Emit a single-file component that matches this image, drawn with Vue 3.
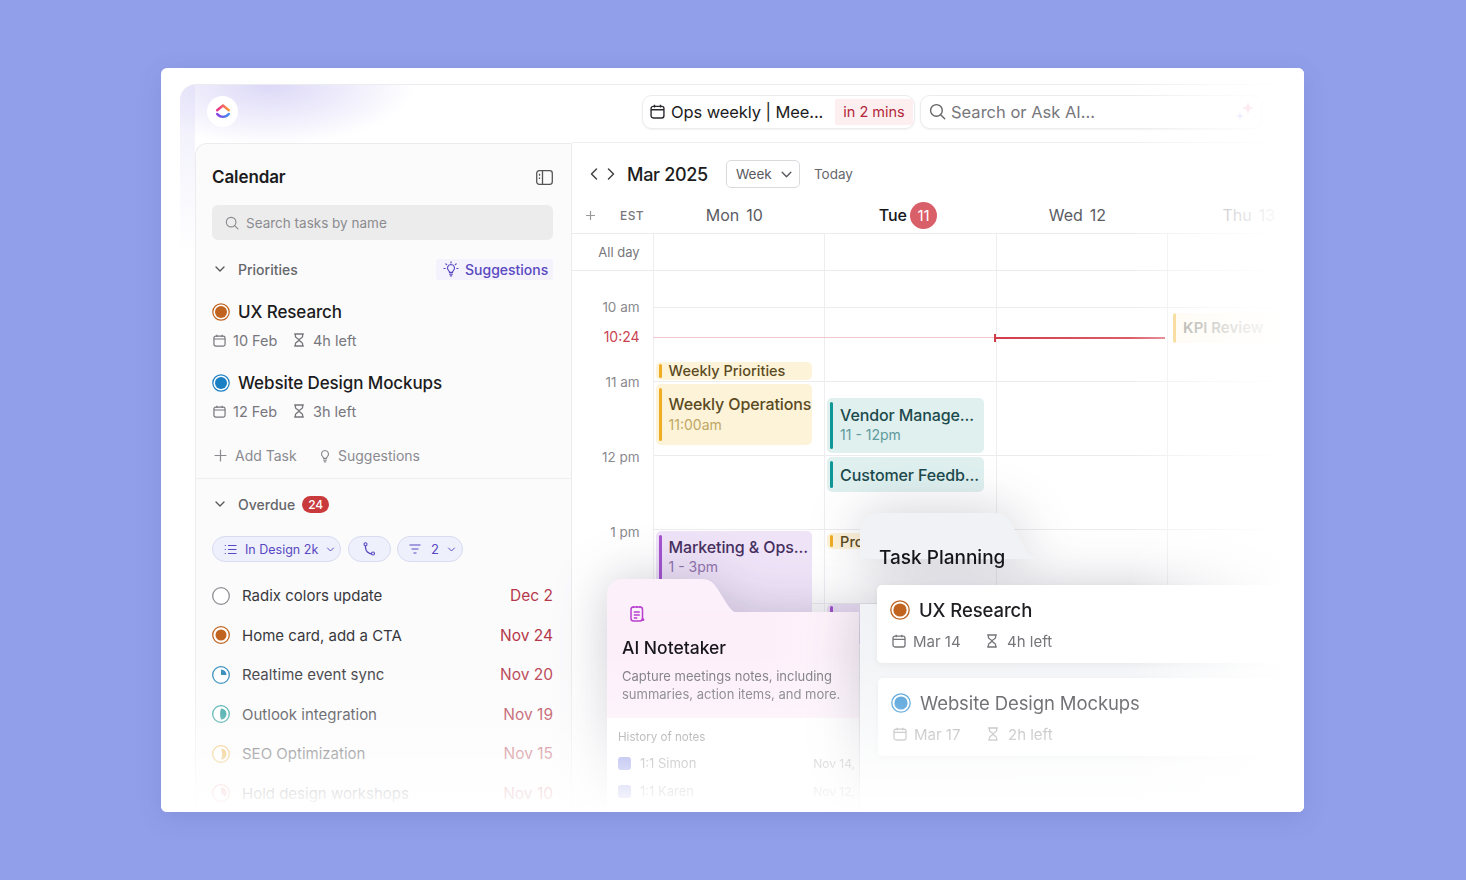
<template>
  <div class="panel">
    <svg class="defs" width="0" height="0" aria-hidden="true">
      <symbol id="i-cal" viewBox="0 0 14 14">
        <rect x="1" y="2.2" width="12" height="10.8" rx="2" fill="none" stroke="currentColor" stroke-width="1.3" />
        <path d="M1 5.4h12M4.2.8v2.4M9.8.8v2.4" fill="none" stroke="currentColor" stroke-width="1.3" />
      </symbol>
      <symbol id="i-glass" viewBox="0 0 12 14">
        <path d="M1.2 1h9.6M1.2 13h9.6M2.4 1v2.4c0 1.500 3.600 2.500 3.600 3.600S2.400 9.200 2.400 10.600V13M9.600 1v2.400C9.600 4.900 6 5.900 6 7s3.600 2.200 3.600 3.600V13" fill="none" stroke="currentColor" stroke-width="1.300" />
      </symbol>
      <symbol id="i-search" viewBox="0 0 16 16">
        <circle cx="7" cy="7" r="5.500" fill="none" stroke="currentColor" stroke-width="1.300" />
        <path d="M11 11l3.800 3.800" fill="none" stroke="currentColor" stroke-width="1.300" stroke-linecap="round" />
      </symbol>
      <symbol id="i-down" viewBox="0 0 12 12">
        <path d="M2 4l4 4 4-4" fill="none" stroke="currentColor" stroke-width="1.300" stroke-linecap="round" stroke-linejoin="round" />
      </symbol>
      <symbol id="i-bulb" viewBox="0 0 16 16">
        <path d="M8 3.500a3.600 3.600 0 0 0-2.200 6.400c.5.400.7.900.7 1.400h3c0-.5.200-1 .7-1.400A3.600 3.600 0 0 0 8 3.500zM6.700 13.200h2.600M7.300 14.800h1.400" fill="none" stroke="currentColor" stroke-width="1.200" stroke-linecap="round" />
      </symbol>
    </svg>

    <div class="frame">
      <header class="topbar">
        <div class="logo">
          <svg width="16" height="17" viewBox="0 0 16 17">
            <defs>
              <linearGradient id="lg-up" x1="0" x2="1" y1="0" y2="0">
                <stop offset="0" stop-color="#e8308f" />
                <stop offset="1" stop-color="#fb9a36" />
              </linearGradient>
              <linearGradient id="lg-down" x1="0" x2="1" y1="0" y2="0">
                <stop offset="0" stop-color="#8a3fe0" />
                <stop offset="1" stop-color="#3f8df0" />
              </linearGradient>
            </defs>
            <path d="M2.200 7.200L8 2.500l5.800 4.700" fill="none" stroke="url(#lg-up)" stroke-width="2.400" stroke-linecap="round" stroke-linejoin="round" />
            <path d="M2.200 11c3.200 3.800 8.400 3.800 11.600 0" fill="none" stroke="url(#lg-down)" stroke-width="2.400" stroke-linecap="round" />
          </svg>
        </div>
        <div class="meeting">
          <svg class="meeting-icon" width="15" height="15"><use href="#i-cal" /></svg>
          <span class="meeting-name">Ops weekly | Mee...</span>
          <span class="meeting-time">in 2 mins</span>
        </div>
        <div class="ask">
          <svg class="ask-icon" width="17" height="17"><use href="#i-search" /></svg>
          <span>Search or Ask AI...</span>
          <svg class="sparkle" width="20" height="20" viewBox="0 0 20 20">
            <path d="M13 1l1.500 4.500L19 7l-4.500 1.500L13 13l-1.500-4.500L7 7l4.500-1.500z" fill="#f57ea6" />
            <path d="M5 11l1 3 3 1-3 1-1 3-1-3-3-1 3-1z" fill="#a3aaf5" />
          </svg>
        </div>
      </header>

      <div class="body">
        <aside class="sidebar">
          <section class="section first">
            <div class="side-head">
              <h1>Calendar</h1>
              <svg width="17" height="15" viewBox="0 0 17 15">
                <rect x=".7" y=".7" width="15.600" height="13.600" rx="2.500" fill="none" stroke="#555" stroke-width="1.300" />
                <path d="M6.500 1v13" stroke="#555" stroke-width="1.300" />
                <path d="M3.500 3.800v2M3.500 7.500v1.500" stroke="#555" stroke-width="1.300" />
              </svg>
            </div>
            <div class="side-search">
              <svg width="14" height="14"><use href="#i-search" /></svg>
              <span>Search tasks by name</span>
            </div>
            <div class="group-head">
              <svg class="chev" width="12" height="12"><use href="#i-down" /></svg>
              <span class="group-name">Priorities</span>
              <span class="suggest">
                <svg width="16" height="16" viewBox="0 0 16 16">
                  <use href="#i-bulb" />
                  <path d="M8 .8v1.200M2.800 2.800l.9.900M13.200 2.800l-.9.900M1 7.500h1.200M13.800 7.500H15" stroke="currentColor" stroke-width="1.200" stroke-linecap="round" />
                </svg>
                Suggestions
              </span>
            </div>
            <div v-for="task in priorities" :key="task.name" class="task">
              <div class="task-title">
                <svg width="18" height="18" viewBox="0 0 18 18">
                  <circle cx="9" cy="9" r="8.200" fill="#fff" :stroke="task.color" stroke-width="1.200" />
                  <circle cx="9" cy="9" r="6" :fill="task.color" />
                </svg>
                {{ task.name }}
              </div>
              <div class="task-meta">
                <svg width="13" height="13"><use href="#i-cal" /></svg>
                <span class="meta-date">{{ task.date }}</span>
                <svg width="12" height="14"><use href="#i-glass" /></svg>
                <span>{{ task.left }}</span>
              </div>
            </div>
            <div class="add-row">
              <svg width="13" height="13" viewBox="0 0 13 13">
                <path d="M6.500 1v11M1 6.500h11" stroke="currentColor" stroke-width="1.200" stroke-linecap="round" />
              </svg>
              <span class="add-label">Add Task</span>
              <svg width="16" height="16"><use href="#i-bulb" /></svg>
              <span>Suggestions</span>
            </div>
          </section>

          <section class="section">
            <div class="overdue-head">
              <svg class="chev" width="12" height="12"><use href="#i-down" /></svg>
              <span class="group-name">Overdue</span>
              <span class="count">24</span>
            </div>
            <div class="chips">
              <span class="chip">
                <svg width="13" height="11" viewBox="0 0 13 11">
                  <path d="M4 1.500h8.500M4 5.500h8.500M4 9.500h8.500M.8 1.500h1M.8 5.500h1M.8 9.500h1" stroke="currentColor" stroke-width="1.200" />
                </svg>
                In Design 2k
                <svg width="9" height="9"><use href="#i-down" /></svg>
              </span>
              <span class="chip chip-phone">
                <svg width="13" height="14" viewBox="0 0 13 14">
                  <path d="M2.500 2v3.500c0 3.500 3 6.500 6.500 6.500" fill="none" stroke="currentColor" stroke-width="1.300" />
                  <circle cx="2.500" cy="2.200" r="1.500" fill="#eef0fb" stroke="currentColor" stroke-width="1.100" />
                  <circle cx="10" cy="11.500" r="1.500" fill="#eef0fb" stroke="currentColor" stroke-width="1.100" />
                </svg>
              </span>
              <span class="chip chip-filter">
                <svg width="12" height="10" viewBox="0 0 12 10">
                  <path d="M.5 1h11M2.500 5h7M4.500 9h3" stroke="currentColor" stroke-width="1.200" />
                </svg>
                <span class="chip-num">2</span>
                <svg width="9" height="9"><use href="#i-down" /></svg>
              </span>
            </div>
            <div class="rows">
              <div v-for="row in overdue" :key="row.name" class="row">
                <svg width="18" height="18" viewBox="0 0 18 18">
                  <circle cx="9" cy="9" r="8.300" fill="#fff" :stroke="row.color" stroke-width="1.300" />
                  <circle v-if="row.dot" cx="9" cy="9" r="5.500" :fill="row.color" />
                  <path v-if="row.pie" :d="row.pie" :fill="row.color" />
                </svg>
                <span class="row-name">{{ row.name }}</span>
                <span class="row-date">{{ row.date }}</span>
              </div>
            </div>
          </section>
        </aside>

        <main class="cal">
          <div class="toolbar">
            <svg width="10" height="14" viewBox="0 0 10 14"><path d="M7.500 2L2.500 7l5 5" fill="none" stroke="#444" stroke-width="1.500" stroke-linecap="round" stroke-linejoin="round" /></svg>
            <svg class="next" width="10" height="14" viewBox="0 0 10 14"><path d="M2.500 2l5 5-5 5" fill="none" stroke="#444" stroke-width="1.500" stroke-linecap="round" stroke-linejoin="round" /></svg>
            <span class="month">Mar 2025</span>
            <span class="view">Week <svg width="13" height="13"><use href="#i-down" /></svg></span>
            <span class="today">Today</span>
          </div>

          <div class="days">
            <div class="days-lead">
              <svg width="11" height="11" viewBox="0 0 11 11"><path d="M5.500 1v9M1 5.500h9" stroke="#999" stroke-width="1.200" /></svg>
              <span>EST</span>
            </div>
            <div v-for="day in days" :key="day.name" class="day" :class="{ active: day.active }">
              <span>{{ day.name }}</span>
              <span v-if="day.active" class="day-badge">{{ day.num }}</span>
              <span v-else>{{ day.num }}</span>
            </div>
          </div>

          <div class="allday">
            <div class="allday-label">All day</div>
            <div v-for="day in days" :key="day.name" class="allday-cell"></div>
          </div>

          <div class="grid">
            <div class="times">
              <div v-for="t in times" :key="t" class="time">{{ t }}</div>
              <div class="time-now">10:24</div>
            </div>
            <div class="cols">
              <div v-for="(day, i) in days" :key="day.name" class="col">
                <div
                  v-for="ev in events.filter(e => e.col === i)"
                  :key="ev.top"
                  class="event"
                  :class="[ev.tone, ev.size]"
                  :style="{ top: ev.top + 'px', height: ev.height + 'px', width: ev.width + 'px' }"
                >
                  <div v-if="ev.title" class="event-title">{{ ev.title }}</div>
                  <div v-if="ev.sub" class="event-sub">{{ ev.sub }}</div>
                </div>
              </div>
              <div class="now-line"></div>
              <div class="now-strong"></div>
            </div>
          </div>
        </main>
      </div>
    </div>

    <div class="float notes">
      <svg class="tab" width="132" height="34" viewBox="0 0 132 34">
        <path d="M0 34V16C0 6 6 0 16 0h78c8 0 12 3 16 9l10 16c4 6 7 9 12 9z" fill="#fcf0fb" />
      </svg>
      <div class="notes-head">
        <svg class="notes-icon" width="15" height="17" viewBox="0 0 15 17">
          <rect x="1" y="2" width="11.500" height="14" rx="2.500" fill="none" stroke="#b83fd0" stroke-width="1.500" />
          <path d="M3.500 1v2M6.700 1v2M10 1v2M3.800 7h6M3.800 10h6M3.800 13h3.500" stroke="#b83fd0" stroke-width="1.300" />
          <circle cx="12.800" cy="14.500" r="1.500" fill="#b83fd0" />
        </svg>
        <h2>AI Notetaker</h2>
        <p>Capture meetings notes, including summaries, action items, and more.</p>
      </div>
      <div class="notes-list">
        <div class="notes-label">History of notes</div>
        <div v-for="n in notes" :key="n.name" class="note">
          <span class="note-mark"></span>
          <span>{{ n.name }}</span>
          <span class="note-date">{{ n.date }}</span>
        </div>
      </div>
    </div>

    <div class="float plan">
      <svg class="tab" width="182" height="46" viewBox="0 0 182 46">
        <path d="M0 46V20C0 7 7 0 20 0h112c10 0 16 3 20 12l12 22c4 8 9 12 18 12z" fill="#f0f2f5" />
      </svg>
      <div class="plan-body">
        <h2>Task Planning</h2>
        <div v-for="card in planning" :key="card.name" class="plan-card" :class="{ dim: card.dim }">
          <div class="plan-title">
            <svg width="20" height="20" viewBox="0 0 20 20">
              <circle cx="10" cy="10" r="9.200" fill="#fff" :stroke="card.color" stroke-width="1.300" />
              <circle cx="10" cy="10" r="6.600" :fill="card.color" />
            </svg>
            {{ card.name }}
          </div>
          <div class="plan-meta">
            <svg width="14" height="14"><use href="#i-cal" /></svg>
            <span class="plan-date">{{ card.date }}</span>
            <svg width="12" height="14"><use href="#i-glass" /></svg>
            <span>{{ card.left }}</span>
          </div>
        </div>
      </div>
    </div>

    <div class="fade-right"></div>
    <div class="fade-bottom"></div>
  </div>
</template>

<script setup>
const priorities = [
  { name: 'UX Research', date: '10 Feb', left: '4h left', color: '#c0641f' },
  { name: 'Website Design Mockups', date: '12 Feb', left: '3h left', color: '#1b7fc4' },
];

const overdue = [
  { name: 'Radix colors update', date: 'Dec 2', color: '#8f8f94' },
  { name: 'Home card, add a CTA', date: 'Nov 24', color: '#c0641f', dot: true },
  { name: 'Realtime event sync', date: 'Nov 20', color: '#2b86b8', pie: 'M9 3.500A5.500 5.500 0 0 1 14.500 9H9z' },
  { name: 'Outlook integration', date: 'Nov 19', color: '#2a9c9c', pie: 'M9 3.500A5.500 5.500 0 0 1 9 14.500C7.800 11 7.800 7 9 3.500z' },
  { name: 'SEO Optimization', date: 'Nov 15', color: '#e8a93a', pie: 'M9 3.500A5.500 5.500 0 0 1 9 14.500C10.500 11 10.500 7 9 3.500z' },
  { name: 'Hold design workshops', date: 'Nov 10', color: '#e58080', pie: 'M9 3.500A5.500 5.500 0 0 1 12.900 12.900L9 9z' },
];

const days = [
  { name: 'Mon', num: 10 },
  { name: 'Tue', num: 11, active: true },
  { name: 'Wed', num: 12 },
  { name: 'Thu', num: 13 },
];

const times = ['10 am', '11 am', '12 pm', '1 pm', '2 pm'];

// top is counted from the top of the hour grid
const events = [
  { col: 0, title: 'Weekly Priorities', tone: 'amber', size: 'tiny', top: 91, height: 18, width: 156 },
  { col: 0, title: 'Weekly Operations', sub: '11:00am', tone: 'amber', size: 'tall', top: 113, height: 61, width: 156 },
  { col: 0, title: 'Marketing & Ops...', sub: '1 - 3pm', tone: 'violet', top: 260, height: 90, width: 156 },
  { col: 1, title: 'Vendor Manage...', sub: '11 - 12pm', tone: 'teal', top: 127, height: 55, width: 157 },
  { col: 1, title: 'Customer Feedb...', tone: 'teal', size: 'single', top: 186, height: 35, width: 157 },
  { col: 1, title: 'Pro', tone: 'amber', size: 'tiny', top: 262, height: 16, width: 40 },
  { col: 1, tone: 'violet', size: 'tiny', top: 333, height: 40, width: 157 },
  { col: 3, title: 'KPI Review', tone: 'kpi', size: 'single', top: 42, height: 30, width: 120 },
];

const notes = [
  { name: '1:1 Simon', date: 'Nov 14,' },
  { name: '1:1 Karen', date: 'Nov 12,' },
];

const planning = [
  { name: 'UX Research', date: 'Mar 14', left: '4h left', color: '#c0641f' },
  { name: 'Website Design Mockups', date: 'Mar 17', left: '2h left', color: '#3f97d6', dim: true },
];
</script>

<style>
html, body {
  margin: 0;
  background: #919fea;
}
</style>

<style scoped>
.panel {
  position: relative;
  width: 1143px;
  height: 744px;
  margin: 68px 0 68px 161px;
  background: #fff;
  border-radius: 6px;
  overflow: hidden;
  font-family: Inter, "Liberation Sans", sans-serif;
  color: #1c1c20;
  box-shadow: 0 6px 24px rgba(60, 70, 140, .15);
}
.defs { position: absolute; }
svg { flex: none; display: block; }
h1, h2, p { margin: 0; }

.frame {
  margin: 16px 0 0 19px;
  height: 728px;
  border-top: 1px solid #ebecf0;
  border-top-left-radius: 16px;
  background:
    radial-gradient(145px 60px at 90px 0, #dcd8f7, rgba(220, 216, 247, 0) 100%),
    linear-gradient(to bottom, #efeefb, #fff 170px);
  background-size: 100% 100%, 15px 100%;
  background-repeat: no-repeat;
}
.topbar {
  height: 58px;
  box-sizing: border-box;
  padding: 0 0 5px 27px;
  display: flex;
  align-items: center;
}
.logo {
  width: 31px;
  height: 31px;
  border-radius: 50%;
  background: #fff;
  display: flex;
  align-items: center;
  justify-content: center;
  margin-right: 404px;
}
.meeting {
  width: 273px;
  height: 34px;
  box-sizing: border-box;
  border: 1px solid #ececef;
  border-radius: 10px;
  display: flex;
  align-items: center;
  background: #fff;
  box-shadow: 0 1px 2px rgba(0, 0, 0, .06);
  margin-right: 5px;
  font-size: 16.500px;
}
.meeting-icon { margin: 0 6px 0 7px; color: #2a2a2e; }
.meeting-name { white-space: nowrap; letter-spacing: -.1px; }
.meeting-time {
  margin-left: auto;
  margin-right: 1px;
  width: 78px;
  height: 26px;
  line-height: 25px;
  text-align: center;
  background: #fdeff0;
  color: #b3263a;
  font-size: 14.500px;
  border-radius: 2px;
  white-space: nowrap;
}
.ask {
  width: 342px;
  height: 34px;
  box-sizing: border-box;
  border: 1px solid #ececef;
  border-radius: 10px;
  display: flex;
  align-items: center;
  background: #fff;
  box-shadow: 0 1px 2px rgba(0, 0, 0, .06);
  font-size: 16.500px;
  color: #77777c;
  padding-left: 8px;
}
.ask-icon { margin-right: 5px; color: #666; }
.sparkle { margin-left: auto; margin-right: 6px; margin-top: -2px; }

.body { display: flex; }
.sidebar {
  width: 377px;
  margin-left: 15px;
  height: 670px;
  box-sizing: border-box;
  flex: none;
  background: #fbfbfc;
  border: 1px solid #ececef;
  border-top-left-radius: 12px;
  border-width: 1px 1px 0 1px;
}
.section { padding: 0 18px 0 16px; }
.section.first { padding-bottom: 13px; border-bottom: 1px solid #efeff2; }
.side-head {
  height: 34px;
  margin-top: 16px;
  display: flex;
  align-items: center;
  justify-content: space-between;
}
.side-head h1 { font-size: 17px; font-weight: 600; letter-spacing: -.1px; }
.side-search {
  height: 35px;
  margin-top: 11px;
  border-radius: 6px;
  background: #ececed;
  display: flex;
  align-items: center;
  gap: 7px;
  padding-left: 13px;
  color: #8b8b8f;
  font-size: 13.500px;
}
.group-head, .overdue-head {
  display: flex;
  align-items: center;
  color: #66666b;
}
.group-head { height: 22px; margin-top: 18px; }
.chev { margin: 0 12px 0 2px; color: #555; }
.group-name { font-size: 14px; font-weight: 500; }
.suggest {
  margin-left: auto;
  height: 21px;
  width: 117px;
  display: flex;
  align-items: center;
  gap: 6px;
  padding-left: 7px;
  box-sizing: border-box;
  background: #f3f2fd;
  border-radius: 3px;
  color: #5948bf;
  font-size: 14px;
  font-weight: 500;
  white-space: nowrap;
}
.task { margin-top: 21px; }
.task + .task { margin-top: 22px; }
.task-title {
  height: 22px;
  display: flex;
  align-items: center;
  gap: 8px;
  font-size: 17px;
  font-weight: 500;
  letter-spacing: -.1px;
  white-space: nowrap;
}
.task-meta {
  margin-top: 7px;
  height: 20px;
  display: flex;
  align-items: center;
  padding-left: 1px;
  font-size: 14.500px;
  color: #77777c;
}
.task-meta svg:first-child { margin-right: 7px; }
.meta-date { width: 60px; }
.task-meta svg:nth-of-type(2) { margin-right: 8px; }
.add-row {
  margin-top: 24px;
  height: 20px;
  display: flex;
  align-items: center;
  font-size: 14px;
  color: #8a8a8f;
  padding-left: 2px;
}
.add-row svg:first-of-type { margin-right: 8px; }
.add-label { width: 82px; }
.add-row svg:nth-of-type(2) { margin-right: 5px; }

.overdue-head { height: 20px; margin-top: 15px; }
.count {
  margin-left: 7px;
  background: #c93a3c;
  color: #fff;
  font-size: 12px;
  font-weight: 500;
  line-height: 17px;
  width: 27px;
  text-align: center;
  border-radius: 9px;
}
.chips { display: flex; gap: 7px; margin-top: 22px; }
.chip {
  height: 26px;
  box-sizing: border-box;
  border: 1px solid #d8dbf1;
  border-radius: 13px;
  background: #eef0fb;
  display: flex;
  align-items: center;
  padding: 0 8px 0 11px;
  gap: 8px;
  color: #5848c2;
  font-size: 12.500px;
  white-space: nowrap;
}
.chip:first-child { width: 129px; }
.chip-phone { width: 43px; padding: 0; justify-content: center; }
.chip-filter { width: 66px; margin-left: -1px; }
.chip-num { font-size: 13px; margin-left: 2px; }
.rows { margin-top: 14px; }
.row {
  height: 39.500px;
  display: flex;
  align-items: center;
  font-size: 15px;
  color: #38383d;
}
.row-name { margin-left: 12px; white-space: nowrap; }
.row-date { margin-left: auto; color: #b5384a; font-size: 15.500px; }

.cal {
  flex: 1;
  min-width: 0;
  border-top: 1px solid #efeff2;
  margin-top: -1px;
}
.toolbar {
  height: 54px;
  padding: 8px 0 0 17px;
  box-sizing: border-box;
  display: flex;
  align-items: center;
}
.next { margin-left: 7px; }
.month { font-size: 18px; font-weight: 500; margin-left: 11px; white-space: nowrap; letter-spacing: -.3px; }
.view {
  width: 74px;
  height: 28px;
  box-sizing: border-box;
  margin-left: 18px;
  border: 1px solid #d9dade;
  border-radius: 5px;
  display: flex;
  align-items: center;
  gap: 8px;
  padding-left: 9px;
  font-size: 13.500px;
  color: #5a5a5f;
}
.today { margin-left: 14px; font-size: 13.500px; color: #66666b; }
.days {
  height: 36px;
  display: flex;
  align-items: center;
  border-bottom: 1px solid #ececef;
  font-size: 16px;
}
.days-lead {
  width: 80.600px;
  flex: none;
  display: flex;
  align-items: center;
  padding-left: 13px;
  box-sizing: border-box;
  font-size: 12px;
  font-weight: 500;
  letter-spacing: .4px;
  color: #77777c;
}
.days-lead span { margin-left: 24px; }
.day {
  width: 171.500px;
  flex: none;
  display: flex;
  align-items: center;
  justify-content: center;
  gap: 7px;
  color: #5b5c63;
  padding-right: 8px;
  box-sizing: border-box;
}
.day.active { color: #16161a; font-weight: 500; gap: 3px; padding-right: 4px; }
.day-badge {
  width: 27px;
  height: 27px;
  border-radius: 50%;
  background: #d95f69;
  color: #fff;
  font-weight: 400;
  font-size: 15px;
  line-height: 27px;
  text-align: center;
}
.allday {
  height: 36px;
  display: flex;
  border-bottom: 1px solid #ececef;
}
.allday-label {
  width: 80.600px;
  flex: none;
  box-sizing: border-box;
  padding-right: 13px;
  text-align: right;
  line-height: 36px;
  font-size: 13px;
  color: #77777c;
}
.allday-cell {
  width: 171.500px;
  flex: none;
  box-sizing: border-box;
  border-left: 1px solid #eeeef0;
}
.grid { display: flex; height: 500px; }
.times {
  position: relative;
  width: 80.600px;
  flex: none;
  margin-top: -1px;
  font-size: 13.500px;
  color: #8a8a8f;
}
.time {
  height: 75px;
  line-height: 75px;
  padding-right: 13px;
  text-align: right;
}
.time-now {
  position: absolute;
  right: 13px;
  top: 58px;
  line-height: 18px;
  color: #c94452;
  font-size: 14px;
}
.cols {
  position: relative;
  display: flex;
  flex: none;
  background-image: linear-gradient(to bottom, #ececef 1px, transparent 1px);
  background-size: 100% 74px;
  background-position: 0 36px;
}
.col {
  position: relative;
  width: 171.500px;
  height: 500px;
  flex: none;
  box-sizing: border-box;
  border-left: 1px solid #eeeef0;
}
.event {
  position: absolute;
  left: 2px;
  box-sizing: border-box;
  border-radius: 5px;
  padding: 5px 0 0 13px;
  overflow: hidden;
  white-space: nowrap;
}
.event::before {
  content: "";
  position: absolute;
  left: 3px;
  top: 4px;
  bottom: 4px;
  width: 3px;
  border-radius: 2px;
  background: var(--bar);
}
.event-title { font-size: 16px; font-weight: 500; line-height: 22px; letter-spacing: -.12px; }
.event-sub { font-size: 14px; line-height: 18px; margin-top: 0; }
.event.tall { padding-top: 9px; }
.event.tall .event-sub { margin-top: 1px; }
.event.tiny { padding-top: 0; }
.event.tiny::before { top: 2px; bottom: 2px; }
.event.tiny .event-title { font-size: 14.500px; line-height: 18px; letter-spacing: 0; }
.event.single { display: flex; align-items: center; padding-top: 0; }
.amber { --bar: #f0ad24; background: #fdf3d9; color: #5b4a1e; }
.amber .event-sub { color: #bfa763; }
.teal { --bar: #0f9797; background: #dff0ef; color: #1c4a4c; padding-top: 6px; }
.teal .event-sub { color: #5f9b9d; }
.violet { --bar: #a552d0; background: #efe3f8; color: #46305f; }
.violet .event-sub { color: #8f74ad; }
.kpi { --bar: #f6cb6c; background: #fffaf0; color: #8a8a80; left: 5px; border-radius: 3px; }
.kpi::before { left: 0; top: 0; bottom: 0; }
.kpi .event-title { font-size: 15px; font-weight: 600; letter-spacing: 0; }
.kpi.single { padding-left: 10px; }
.now-line {
  position: absolute;
  left: 0;
  top: 66px;
  width: 341px;
  height: 1px;
  background: #f3c6cc;
}
.now-strong {
  position: absolute;
  left: 341px;
  top: 66px;
  width: 171px;
  height: 2px;
  background: linear-gradient(to right, #d23c4a, #dd6671);
}
.now-strong::before {
  content: "";
  position: absolute;
  left: 0;
  top: -3px;
  width: 2px;
  height: 8px;
  background: #d23c4a;
}

.float {
  position: absolute;
  filter: drop-shadow(0 0 26px rgba(45, 45, 80, .24));
}
.tab { margin-bottom: -1px; }
.notes { left: 446px; top: 511px; width: 252px; }
.notes-head {
  height: 106px;
  padding: 0 0 0 15px;
  background: linear-gradient(to right, #fdeffa 60%, #fdf3fa);
  position: relative;
}
.notes-icon {
  position: absolute;
  left: 23px;
  top: -7px;
}
.notes-head h2 {
  padding-top: 24px;
  font-size: 17.500px;
  font-weight: 500;
  line-height: 24px;
  color: #17171b;
}
.notes-head p {
  margin-top: 7px;
  font-size: 13px;
  line-height: 18px;
  color: #76767b;
  white-space: normal;
  width: 232px;
}
.notes-list {
  background: #fff;
  height: 130px;
  padding: 12px 4px 0 11px;
  font-size: 13px;
  color: #77777c;
  overflow: hidden;
}
.notes-label { font-size: 11.600px; line-height: 14px; color: #85858a; }
.note {
  height: 28px;
  display: flex;
  align-items: center;
  white-space: nowrap;
  margin-top: 5px;
}
.note + .note { margin-top: 0; }
.note-mark {
  width: 13px;
  height: 13px;
  border-radius: 3px;
  background: #6f78e0;
  margin-right: 9px;
  flex: none;
}
.note-date { margin-left: auto; color: #a0a0a5; font-size: 12px; }

.plan { left: 699px; top: 445px; width: 444px; }
.plan-body {
  height: 254px;
  padding: 0 0 0 17px;
  background: linear-gradient(to bottom, #f0f2f5, #f6f7f9 60%, #fff);
}
.plan-body h2 {
  position: absolute;
  left: 19px;
  top: 32px;
  font-size: 19px;
  font-weight: 500;
  line-height: 26px;
  color: #16161a;
}
.plan-card {
  height: 78px;
  box-sizing: border-box;
  background: #fff;
  border-radius: 5px;
  padding: 14px 0 0 13px;
  margin-bottom: 15px;
  position: relative;
  top: -19px;
  box-shadow: 0 2px 6px rgba(30, 30, 60, .05);
}
.plan-card:first-of-type { margin-top: 46px; }
.plan-title {
  height: 22px;
  display: flex;
  align-items: center;
  gap: 9px;
  font-size: 18.500px;
  font-weight: 500;
  letter-spacing: -.1px;
  color: #1e1e22;
  white-space: nowrap;
}
.plan-meta {
  margin-top: 10px;
  height: 20px;
  display: flex;
  align-items: center;
  font-size: 15px;
  color: #75757a;
  padding-left: 2px;
}
.plan-meta svg:first-child { margin-right: 7px; }
.plan-date { width: 73px; }
.plan-meta svg:nth-of-type(2) { margin-right: 9px; }
.plan-card.dim { left: 1px; }
.plan-card.dim .plan-title { color: #4a4a4f; font-weight: 400; }
.plan-card.dim .plan-meta { color: #a8a8ac; }

.fade-right {
  position: absolute;
  top: 0;
  right: 0;
  bottom: 0;
  width: 174px;
  background: linear-gradient(to right, rgba(255, 255, 255, 0), rgba(255, 255, 255, .5) 35%, rgba(255, 255, 255, .8) 62%, #fff 90%);
  pointer-events: none;
}
.fade-bottom {
  position: absolute;
  left: 0;
  right: 0;
  bottom: 0;
  height: 160px;
  background: linear-gradient(to bottom, rgba(255, 255, 255, 0), rgba(255, 255, 255, .28) 39%, rgba(255, 255, 255, .6) 63%, rgba(255, 255, 255, .88) 88%, #fff);
  pointer-events: none;
}
</style>
